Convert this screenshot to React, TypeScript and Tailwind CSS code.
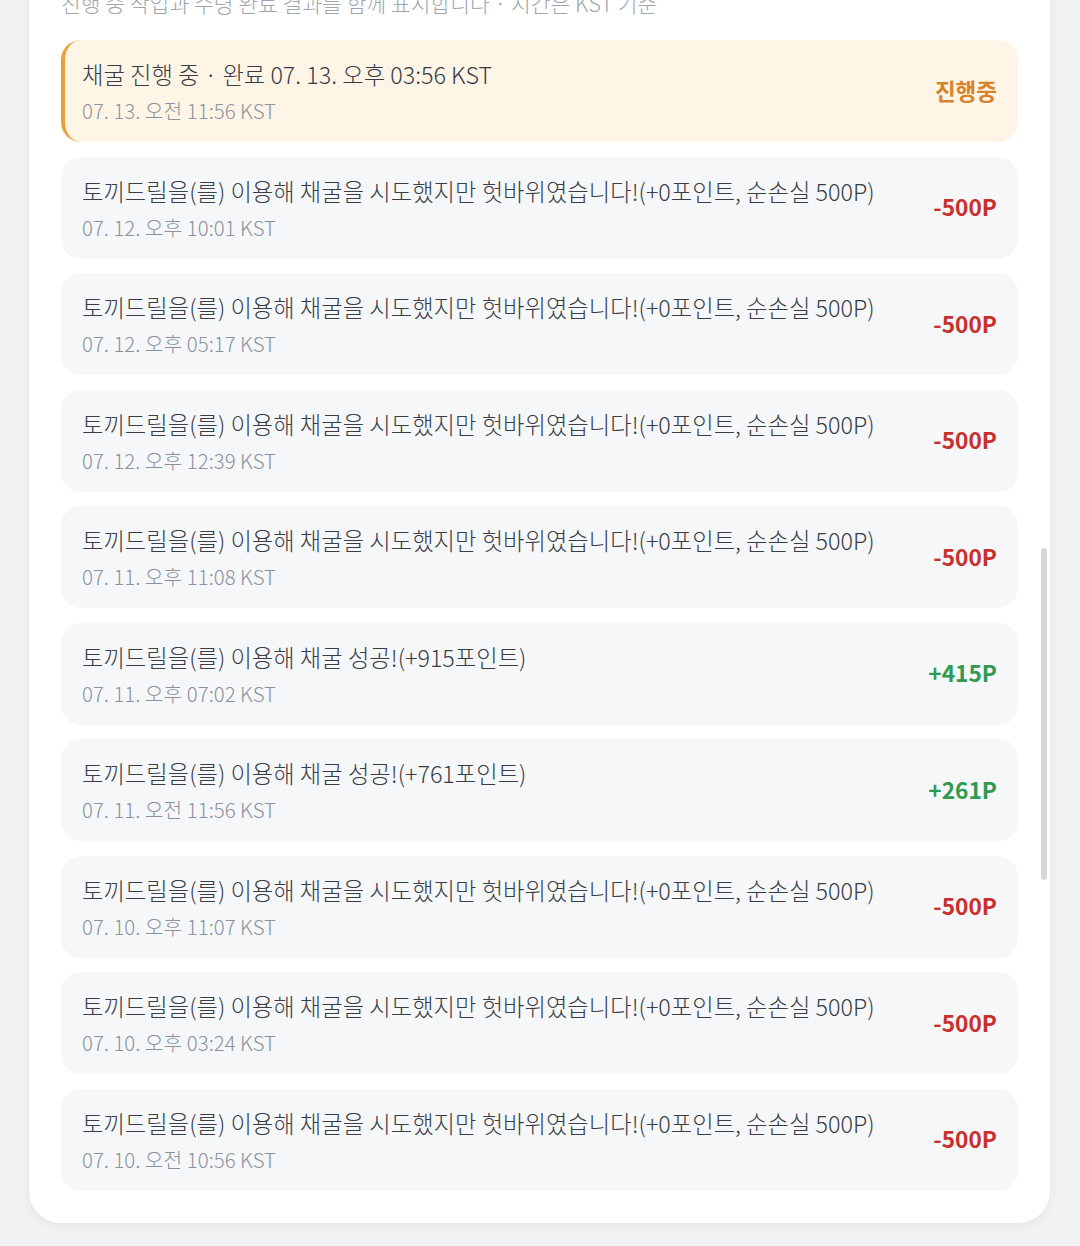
const rows = [
  { text: "토끼드릴을(를) 이용해 채굴을 시도했지만 헛바위였습니다!(+0포인트, 순손실 500P)", date: "07. 12. 오후 10:01 KST", amount: "-500P" },
  { text: "토끼드릴을(를) 이용해 채굴을 시도했지만 헛바위였습니다!(+0포인트, 순손실 500P)", date: "07. 12. 오후 05:17 KST", amount: "-500P" },
  { text: "토끼드릴을(를) 이용해 채굴을 시도했지만 헛바위였습니다!(+0포인트, 순손실 500P)", date: "07. 12. 오후 12:39 KST", amount: "-500P" },
  { text: "토끼드릴을(를) 이용해 채굴을 시도했지만 헛바위였습니다!(+0포인트, 순손실 500P)", date: "07. 11. 오후 11:08 KST", amount: "-500P" },
  { text: "토끼드릴을(를) 이용해 채굴 성공!(+915포인트)", date: "07. 11. 오후 07:02 KST", amount: "+415P" },
  { text: "토끼드릴을(를) 이용해 채굴 성공!(+761포인트)", date: "07. 11. 오전 11:56 KST", amount: "+261P" },
  { text: "토끼드릴을(를) 이용해 채굴을 시도했지만 헛바위였습니다!(+0포인트, 순손실 500P)", date: "07. 10. 오후 11:07 KST", amount: "-500P" },
  { text: "토끼드릴을(를) 이용해 채굴을 시도했지만 헛바위였습니다!(+0포인트, 순손실 500P)", date: "07. 10. 오후 03:24 KST", amount: "-500P" },
  { text: "토끼드릴을(를) 이용해 채굴을 시도했지만 헛바위였습니다!(+0포인트, 순손실 500P)", date: "07. 10. 오전 10:56 KST", amount: "-500P" },
]

export default function App() {
  return (
    <div
      className="relative min-h-[1246px] overflow-hidden bg-[#f1f2f4] pb-[24px]"
      style={{ fontFamily: '"Noto Sans CJK KR", "Noto Sans", sans-serif' }}
    >
      <div className="mx-[29px] mr-[30px] mt-[-34px] rounded-b-[32px] border-b border-[#efe9dc] bg-white px-[32px] pb-[32px] pt-[22px] shadow-[0_2px_10px_rgba(0,0,0,0.06)]">
        <p className="text-[21.5px] font-light leading-[30px] text-[#a0a5ad]">
          진행 중 작업과 수령 완료 결과를 함께 표시합니다 · 시간은 KST 기준
        </p>

        <div className="mt-[22px] flex flex-col gap-[14.5px]">
          <div className="flex items-center justify-between rounded-[20px] border-l-4 border-[#e8a23a] bg-[#fff5e6] pb-[18px] pl-[17px] pr-[21px] pt-[18px]">
            <div>
              <div className="text-[23.3px] font-light leading-[32px] text-[#363b44]">
                채굴 진행 중 · 완료 07. 13. 오후 03:56 KST
              </div>
              <div className="mt-[6px] text-[20.4px] font-light leading-[28px] text-[#8d939c]">
                07. 13. 오전 11:56 KST
              </div>
            </div>
            <span className="text-[22.5px] font-bold text-[#d6842c]">진행중</span>
          </div>

          {rows.map((r, i) => (
            <div
              key={i}
              className="flex items-center justify-between rounded-[20px] bg-[#f6f7f9] pb-[18px] pl-[21px] pr-[21px] pt-[18px]"
            >
              <div>
                <div className="text-[23.3px] font-light leading-[32px] text-[#383d46]">{r.text}</div>
                <div className="mt-[6px] text-[20.4px] font-light leading-[28px] text-[#8b929c]">{r.date}</div>
              </div>
              <span
                className={
                  r.amount.startsWith("+")
                    ? "text-[22.7px] font-bold text-[#2f9a50]"
                    : "text-[22.7px] font-bold text-[#c9302c]"
                }
              >
                {r.amount}
              </span>
            </div>
          ))}
        </div>
      </div>

      {/* overlay scrollbar */}
      <div className="absolute left-[1041px] top-[548px] h-[332px] w-[6px] rounded-full bg-[#d6d6d6]" />
    </div>
  )
}
